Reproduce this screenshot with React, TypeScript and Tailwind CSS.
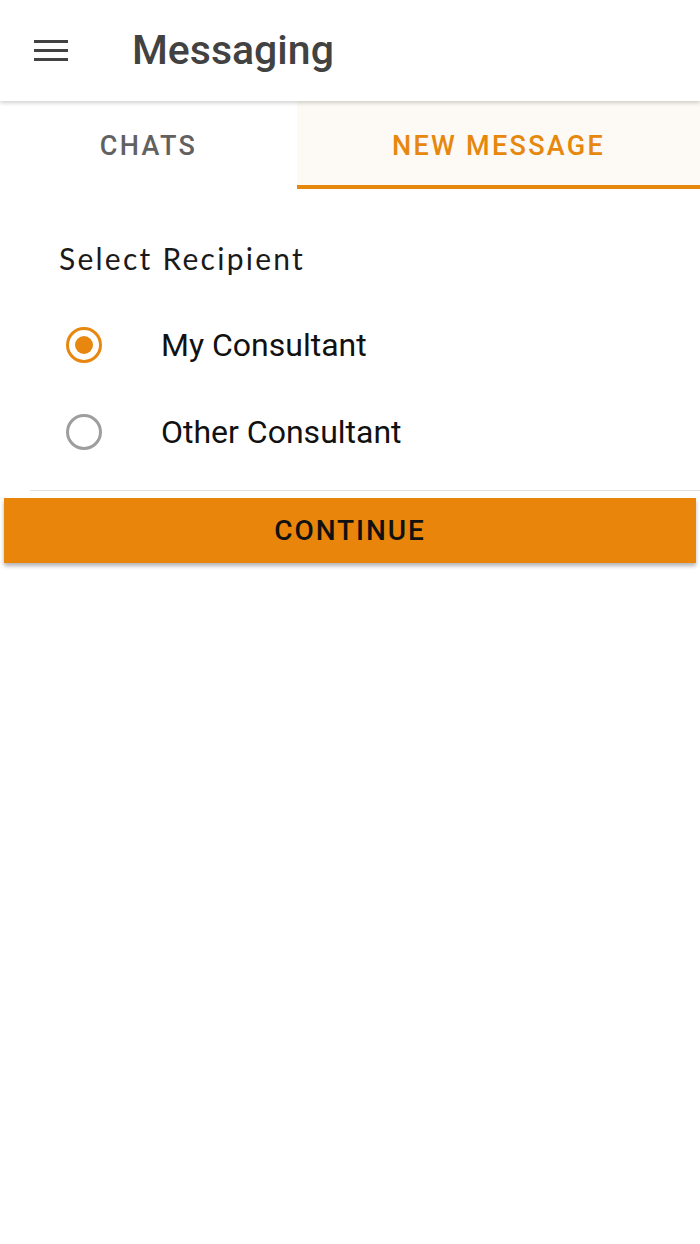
import { useState } from 'react'

const recipients = ['My Consultant', 'Other Consultant']

export default function App() {
  const [tab, setTab] = useState<'chats' | 'new'>('new')
  const [selected, setSelected] = useState(0)

  return (
    <div className="min-h-[1244px] w-[700px] bg-white font-['Roboto',sans-serif]">
      <header className="relative z-10 flex h-[101px] items-center bg-white shadow-[0_2px_4px_rgba(0,0,0,0.18)]">
        <button className="ml-[34px] flex w-[34px] flex-col gap-[6px]">
          <span className="h-[3px] w-full bg-[#424242]" />
          <span className="h-[3px] w-full bg-[#424242]" />
          <span className="h-[3px] w-full bg-[#424242]" />
        </button>
        <h1 className="ml-[64px] text-[41px] font-medium leading-none text-[#424242]">Messaging</h1>
      </header>

      <div className="flex h-[88px]">
        <button
          onClick={() => setTab('chats')}
          className={`flex w-[297px] items-center justify-center border-b-4 pt-[6px] text-[27px] font-medium tracking-[0.085em] ${
            tab === 'chats' ? 'border-[#e6870e] bg-[#fdf9f4] text-[#e6870e]' : 'border-transparent text-[#616161]'
          }`}
        >
          CHATS
        </button>
        <button
          onClick={() => setTab('new')}
          className={`flex flex-1 items-center justify-center border-b-4 pt-[6px] text-[27px] font-medium tracking-[0.085em] ${
            tab === 'new' ? 'border-[#e6870e] bg-[#fdf9f4] text-[#e6870e]' : 'border-transparent text-[#616161]'
          }`}
        >
          NEW MESSAGE
        </button>
      </div>

      <div>
        <p className="mt-[54px] pl-[59px] font-['Lato',sans-serif] text-[30px] leading-[30px] tracking-[0.075em] text-[#1a1a1a]">
          Select Recipient
        </p>

        <div className="mt-[28px]">
          {recipients.map((r, i) => (
            <label
              key={r}
              onClick={() => setSelected(i)}
              className="flex h-[87px] cursor-pointer items-center pl-[66px]"
            >
              <span
                className={`flex h-[36px] w-[36px] items-center justify-center rounded-full border-[3px] ${
                  selected === i ? 'border-[#e8870f]' : 'border-[#9e9e9e]'
                }`}
              >
                {selected === i && <span className="h-[18px] w-[18px] rounded-full bg-[#e8870f]" />}
              </span>
              <span className="ml-[59px] text-[32px] leading-none text-[#111]">{r}</span>
            </label>
          ))}
        </div>

        <div className="ml-[30px] mt-[15px] h-px bg-[#e0e0e0]" />

        <button className="mx-[4px] mt-[7px] flex h-[65px] w-[692px] items-center justify-center bg-[#e8850a] text-[28px] font-medium tracking-[0.07em] text-[#111] shadow-[0_3px_4px_rgba(0,0,0,0.3)]">
          CONTINUE
        </button>
      </div>
    </div>
  )
}
